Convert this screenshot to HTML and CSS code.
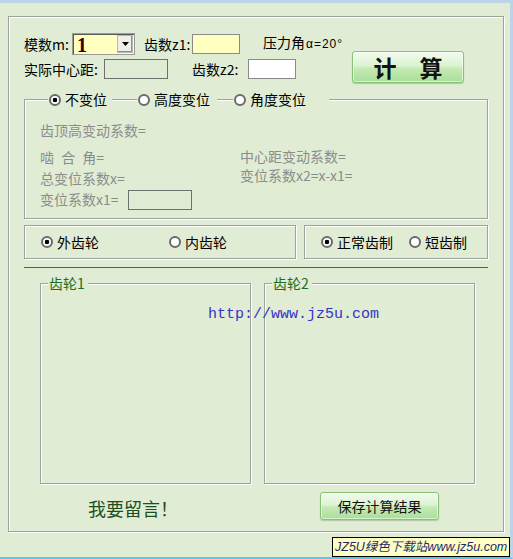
FILE: index.html
```html
<!DOCTYPE html>
<html>
<head>
<meta charset="utf-8">
<link rel="stylesheet" href="styles.css">
</head>
<body>
<div class="window">
  <div class="frame">
    <div class="row row1">
      <span class="lbl w48">模数m:</span>
      <div class="select"><span class="sel-val">1</span><span class="sel-btn"><svg width="7" height="4" viewBox="0 0 7 4"><path d="M0 0H7L3.5 4Z" fill="#000"/></svg></span></div>
      <span class="lbl z1">齿数z1:</span>
      <span class="input yellow w48"></span>
      <span class="lbl angle">压力角<span class="alpha">α=20°</span></span>
    </div>
    <div class="row row2">
      <span class="lbl w80">实际中心距:</span>
      <span class="input plain w64"></span>
      <span class="lbl z2">齿数z2:</span>
      <span class="input white w48"></span>
      <button class="btn calc">计　算</button>
    </div>

    <div class="group g1">
      <div class="legend-radios">
        <label class="radio r1"><i class="dot on"></i>不变位</label>
        <label class="radio r2"><i class="dot"></i>高度变位</label>
        <label class="radio r3"><i class="dot"></i>角度变位</label>
      </div>
      <div class="gray first">齿顶高变动系数=</div>
      <div class="cols">
        <div class="col left">
          <div class="gray ln spaced">啮 合 角=</div>
          <div class="gray ln">总变位系数x=</div>
          <div class="gray ln x1"><span class="x1lbl">变位系数x1=</span><span class="input plain w64"></span></div>
        </div>
        <div class="col right">
          <div class="gray ln2">中心距变动系数=</div>
          <div class="gray ln2">变位系数x2=x-x1=</div>
        </div>
      </div>
    </div>

    <div class="grow">
      <div class="group g2">
        <label class="radio o1"><i class="dot on"></i>外齿轮</label>
        <label class="radio"><i class="dot"></i>内齿轮</label>
      </div>
      <div class="group g3">
        <label class="radio o2"><i class="dot on"></i>正常齿制</label>
        <label class="radio"><i class="dot"></i>短齿制</label>
      </div>
    </div>

    <div class="gline"></div>

    <div class="gears">
      <div class="group gear"><span class="glegend">齿轮1</span></div>
      <div class="group gear"><span class="glegend">齿轮2</span></div>
    </div>

    <div class="bottom">
      <span class="msg">我要留言！</span>
      <button class="btn save">保存计算结果</button>
    </div>
  </div>
  <div class="url">http://www.jz5u.com</div>
  <div class="mark">JZ5U绿色下载站www.jz5u.com</div>
</div>
</body>
</html>
```
FILE: styles.css
```css
* { box-sizing: border-box; }
html, body { margin: 0; padding: 0; }
body {
  width: 513px;
  height: 559px;
  overflow: hidden;
  background: #e0ecd4;
  font-family: "Noto Sans CJK SC", "Noto Sans", sans-serif;
  font-size: 14px;
  color: #000;
}
.window {
  position: relative;
  width: 513px;
  height: 559px;
  border-top: 3px solid #bcd4e8;
  border-right: 3px solid #bcd4e8;
  border-bottom: 2px solid #5cc6e4;
}
.frame {
  margin: 13px 0 0 8px;
  width: 496px;
  height: 516px;
  border: 1px solid #a0a0a0;
  box-shadow: inset 1px 1px 0 #fff, 1px 1px 0 #fff;
  padding: 16px 0 0 15px;
}
.row { display: flex; align-items: center; }
.row1 { height: 22px; }
.row2 { height: 31px; margin-top: -2px; }
.lbl { line-height: 20px; white-space: nowrap; }
.w48 { width: 48px; }
.w80 { width: 80px; }
.w64 { width: 64px; }
.z1 { width: 48px; margin-left: 9px; }
.z2 { width: 56px; margin-left: 24px; }
.angle { margin-left: 23px; margin-top: -3px; }
.alpha { font-family: "Liberation Sans", sans-serif; font-size: 12px; letter-spacing: 1px; margin-left: 1px; }

.select {
  width: 63px;
  height: 22px;
  border: 1px solid #9a9a9a;
  box-shadow: inset 1px 1px 0 #5a5a5a;
  background: #ffffc0;
  display: flex;
  align-items: stretch;
  padding: 1px 1px 1px 2px;
}
.sel-val {
  flex: 1;
  font-family: "Liberation Serif", serif;
  font-weight: bold;
  font-size: 20px;
  line-height: 20px;
  color: #3a0000;
  padding-left: 2px;
}
.sel-btn {
  width: 16px;
  background: #eeeeea;
  border: 1px solid #b8b8b8;
  box-shadow: inset -1px -1px 0 #909090;
  display: flex;
  align-items: center;
  justify-content: center;
}
.input { display: block; height: 20px; border: 1px solid #8a8a8a; }
.yellow { background: #ffffc0; }
.white { background: #fff; }
.plain { border-color: #707070; background: transparent; }

.btn {
  font-family: "Noto Sans CJK SC", sans-serif;
  color: #111;
  border: 1px solid #86c277;
  border-radius: 3px;
  background: linear-gradient(#f2fbee, #dcf3d2 45%, #c4eab4 55%, #aadf98);
  box-shadow: inset 0 0 0 1px rgba(255,255,255,0.55), 0 1px 1px rgba(90,140,80,0.35);
  padding: 0;
  cursor: default;
}
.calc {
  width: 112px;
  height: 32px;
  margin-left: 56px;
  align-self: flex-start;
  margin-top: -2px;
  font-size: 23px;
  font-weight: bold;
  line-height: 30px;
}

.group {
  border: 1px solid #a0a0a0;
  box-shadow: inset 1px 1px 0 #fff, 1px 1px 0 #fff;
}
.g1 { width: 464px; height: 120px; margin-top: 15px; }
.legend-radios { display: flex; height: 17px; margin: -9px 0 0 23px; }
.radio {
  display: flex;
  align-items: center;
  height: 17px;
  line-height: 17px;
  padding-left: 1px;
  background: #e0ecd4;
  white-space: nowrap;
}
.r1 { width: 64px; }
.r2 { width: 80px; margin-left: 25px; }
.r3 { width: 96px; margin-left: 16px; }
.dot {
  display: inline-block;
  flex: none;
  width: 12px;
  height: 12px;
  border-radius: 50%;
  border: 2px solid #6a6a6a;
  background: #fff;
  margin-right: 4px;
}
.dot.on { background: radial-gradient(circle, #000 0 2px, #fff 2.6px); }
.gray { color: #8c8c8c; white-space: nowrap; }
.first { margin: 12px 0 0 15px; line-height: 20px; }
.cols { display: flex; margin: 7px 0 0 15px; }
.left { width: 200px; }
.ln { line-height: 21px; height: 21px; }
.spaced { word-spacing: 4px; }
.x1 { display: flex; align-items: center; }
.x1lbl { width: 88px; }
.right { padding-top: 0; }
.ln2 { line-height: 19px; height: 19px; }

.grow { display: flex; gap: 8px; margin-top: 6px; }
.g2, .g3 { height: 34px; display: flex; align-items: center; padding-left: 15px; }
.g2 { width: 272px; }
.g3 { width: 184px; }
.g2 .radio, .g3 .radio { background: transparent; }
.o1 { width: 128px; }
.o2 { width: 88px; }

.gline { width: 464px; height: 1px; background: #2a7a2a; margin-top: 8px; }

.gears { display: flex; gap: 13px; margin: 15px 0 0 16px; }
.gear { width: 211px; height: 201px; }
.glegend {
  display: inline-block;
  margin: -9px 0 0 7px;
  padding: 0 3px 0 1px;
  line-height: 17px;
  background: #e0ecd4;
  color: #236b23;
  vertical-align: top;
}

.bottom { display: flex; align-items: center; height: 28px; margin-top: 8px; }
.msg { width: 232px; margin-left: 64px; font-size: 18px; line-height: 24px; color: #1e4f1e; margin-top: 3px; }
.save { width: 119px; height: 28px; font-size: 14px; line-height: 26px; }

.url {
  position: absolute;
  left: 208px;
  top: 303px;
  font-family: "Liberation Mono", monospace;
  font-size: 15px;
  line-height: 18px;
  color: #3434c8;
}
.mark {
  position: absolute;
  left: 332px;
  top: 534px;
  width: 178px;
  height: 20px;
  border: 1px solid #000;
  background: #ffffc4;
  font-family: "Liberation Sans", "Noto Sans CJK SC", sans-serif;
  font-style: italic;
  font-size: 12.5px;
  line-height: 18px;
  color: #1c2a6c;
  padding-left: 2px;
  white-space: nowrap;
  overflow: hidden;
}
```
